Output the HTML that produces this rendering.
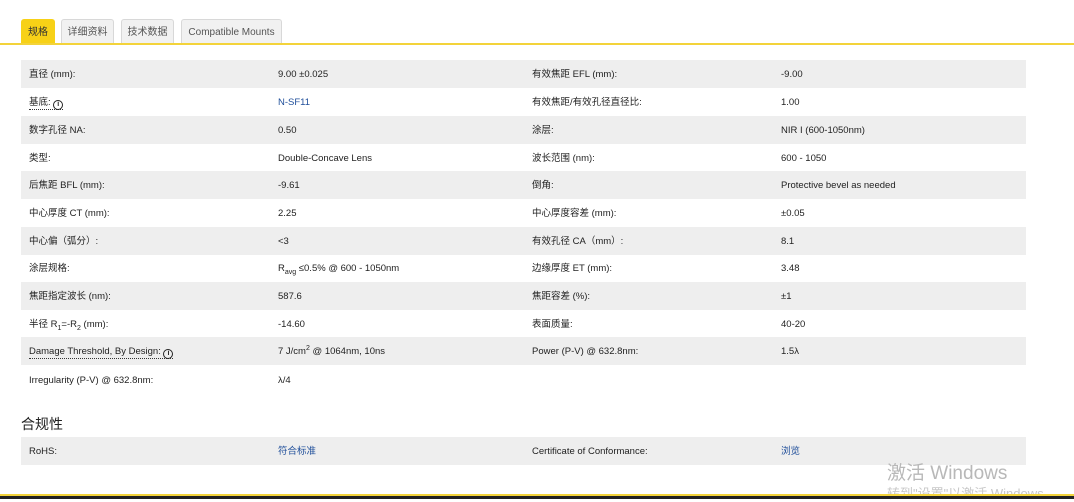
<!DOCTYPE html>
<html><head><meta charset="utf-8"><style>
body{margin:0;width:1074px;height:499px;background:#fff;font-family:"Liberation Sans","Noto Sans CJK SC",sans-serif;font-size:9.5px;color:#222;position:relative;overflow:hidden}
.tab{position:absolute;top:19px;height:24px;line-height:25px;background:#f1f1f1;border:1px solid #d8d8d8;border-bottom:none;border-radius:3px 3px 0 0;color:#555;font-size:10px;text-align:center;box-sizing:border-box}
.tab.on{background:#f7d117;border-color:#f7d117;color:#333}
.line{position:absolute;left:0;top:43px;width:1074px;height:2px;background:#f3d33a}
.r{position:absolute;left:21px;width:1005px;height:28px;line-height:30px;white-space:nowrap}
.g{background:#eeeeee}
.r span.c{position:absolute;top:0}
.a{left:8px}.b{left:257px}.c3{left:511px}.d{left:760px}
.lk{color:#1f4e9a}
.u{border-bottom:1px dotted #333;padding-bottom:1px}
.i{display:inline-block;width:8px;height:8px;border:1.3px solid #222;border-radius:50%;font-size:7px;line-height:8px;text-align:center;font-weight:bold;vertical-align:-1px}
sub,sup{font-size:7px;line-height:0}
h3{position:absolute;left:21px;top:414px;margin:0;font-size:14px;font-weight:normal;color:#222}
</style></head><body>
<div class="tab on" style="left:21px;width:34px">规格</div>
<div class="tab" style="left:61px;width:53px">详细资料</div>
<div class="tab" style="left:121px;width:53px">技术数据</div>
<div class="tab" style="left:181px;width:101px">Compatible Mounts</div>
<div class="line"></div>

<div class="r g" style="top:60px"><span class="c a">直径 (mm):</span><span class="c b">9.00 ±0.025</span><span class="c c3">有效焦距 EFL (mm):</span><span class="c d">-9.00</span></div>
<div class="r" style="top:88px"><span class="c a"><span class="u">基底: <span class="i">i</span></span></span><span class="c b lk">N-SF11</span><span class="c c3">有效焦距/有效孔径直径比:</span><span class="c d">1.00</span></div>
<div class="r g" style="top:116px"><span class="c a">数字孔径 NA:</span><span class="c b">0.50</span><span class="c c3">涂层:</span><span class="c d">NIR I (600-1050nm)</span></div>
<div class="r" style="top:144px"><span class="c a">类型:</span><span class="c b">Double-Concave Lens</span><span class="c c3">波长范围 (nm):</span><span class="c d">600 - 1050</span></div>
<div class="r g" style="top:171px"><span class="c a">后焦距 BFL (mm):</span><span class="c b">-9.61</span><span class="c c3">倒角:</span><span class="c d">Protective bevel as needed</span></div>
<div class="r" style="top:199px"><span class="c a">中心厚度 CT (mm):</span><span class="c b">2.25</span><span class="c c3">中心厚度容差 (mm):</span><span class="c d">±0.05</span></div>
<div class="r g" style="top:227px"><span class="c a">中心偏（弧分）:</span><span class="c b">&lt;3</span><span class="c c3">有效孔径 CA（mm）:</span><span class="c d">8.1</span></div>
<div class="r" style="top:254px"><span class="c a">涂层规格:</span><span class="c b">R<sub>avg</sub> ≤0.5% @ 600 - 1050nm</span><span class="c c3">边缘厚度 ET (mm):</span><span class="c d">3.48</span></div>
<div class="r g" style="top:282px"><span class="c a">焦距指定波长 (nm):</span><span class="c b">587.6</span><span class="c c3">焦距容差 (%):</span><span class="c d">±1</span></div>
<div class="r" style="top:310px"><span class="c a">半径 R<sub>1</sub>=-R<sub>2</sub> (mm):</span><span class="c b">-14.60</span><span class="c c3">表面质量:</span><span class="c d">40-20</span></div>
<div class="r g" style="top:337px"><span class="c a"><span class="u">Damage Threshold, By Design: <span class="i">i</span></span></span><span class="c b">7 J/cm<sup>2</sup> @ 1064nm, 10ns</span><span class="c c3">Power (P-V) @ 632.8nm:</span><span class="c d">1.5λ</span></div>
<div class="r" style="top:366px"><span class="c a">Irregularity (P-V) @ 632.8nm:</span><span class="c b">λ/4</span></div>

<h3>合规性</h3>
<div class="r g" style="top:437px"><span class="c a">RoHS:</span><span class="c b lk">符合标准</span><span class="c c3">Certificate of Conformance:</span><span class="c d lk">浏览</span></div>

<div style="position:absolute;left:887px;top:458px;font-size:19px;color:#b8b8b8">激活 Windows</div>
<div style="position:absolute;left:887px;top:483px;font-size:13px;color:#c8c8c8;white-space:nowrap">转到"设置"以激活 Windows。</div>
<div style="position:absolute;left:0;top:494px;width:1074px;height:2px;background:#f3d33a"></div>
<div style="position:absolute;left:0;top:496px;width:1074px;height:3px;background:#222"></div>
</body></html>
